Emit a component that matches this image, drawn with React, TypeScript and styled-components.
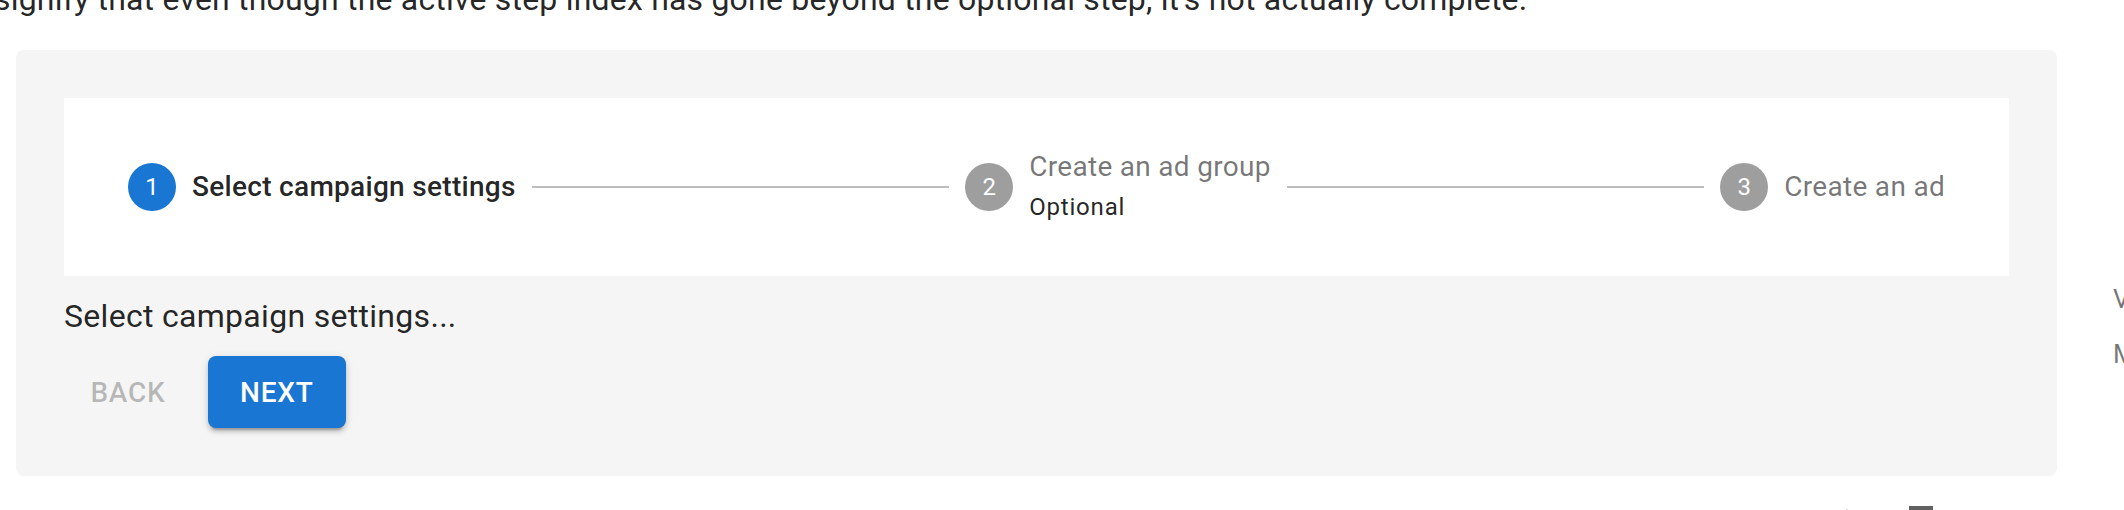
import React from 'react';
import styled, { createGlobalStyle } from 'styled-components';

const GlobalStyle = createGlobalStyle`
html, body {
    margin: 0;
    padding: 0;
    background: #fff;
    overflow: hidden;
    font-family: Roboto, "Liberation Sans", Arial, sans-serif;
    -webkit-font-smoothing: antialiased;
}
`;

interface StepData {
    label: string;
    optional?: boolean;
}

const steps: StepData[] = [
    { label: 'Select campaign settings' },
    { label: 'Create an ad group', optional: true },
    { label: 'Create an ad' },
];

const activeStep = 0;

const Page = styled.div`
    display: flex;
    width: 2124px;
    height: 510px;
    overflow: hidden;
`;

const Main = styled.div`
    flex: none;
    width: 2057px;
    display: flex;
    flex-direction: column;
`;

const Intro = styled.p`
    margin: -25px 0 0 -6px;
    font-size: 32px;
    line-height: 48px;
    letter-spacing: 0.2px;
    color: rgba(0, 0, 0, 0.87);
    white-space: nowrap;
`;

const Demo = styled.div`
    margin: 27px 0 0 16px;
    padding: 48px;
    background: #f5f5f5;
    border-radius: 8px;
`;

const Stepper = styled.div`
    display: flex;
    align-items: center;
    padding: 49px 48px;
    background: #fff;
`;

const Step = styled.div`
    flex: none;
    padding: 0 16px;
    display: flex;
    align-items: center;
`;

const IconBox = styled.span`
    flex: none;
    display: flex;
    padding-right: 16px;
`;

const Circle = styled.span<{ $active: boolean }>`
    width: 48px;
    height: 48px;
    border-radius: 50%;
    background: ${(p) => (p.$active ? '#1976d2' : 'rgba(0, 0, 0, 0.38)')};
    color: #fff;
    font-size: 24px;
    display: flex;
    align-items: center;
    justify-content: center;
`;

const LabelBox = styled.span`
    display: flex;
    flex-direction: column;
`;

const Label = styled.span<{ $active: boolean }>`
    font-size: 28px;
    line-height: 40px;
    letter-spacing: 0.01071em;
    font-weight: ${(p) => (p.$active ? 500 : 400)};
    color: ${(p) => (p.$active ? 'rgba(0, 0, 0, 0.87)' : 'rgba(0, 0, 0, 0.54)')};
    white-space: nowrap;
`;

const Caption = styled.span`
    font-size: 24px;
    line-height: 40px;
    letter-spacing: 0.03333em;
    color: rgba(0, 0, 0, 0.87);
`;

const Connector = styled.div`
    flex: 1 1 auto;
    border-top: 2px solid #bdbdbd;
`;

const Instructions = styled.p`
    margin: 16px 0;
    font-size: 32px;
    line-height: 48px;
    letter-spacing: 0.00938em;
    color: rgba(0, 0, 0, 0.87);
`;

const Actions = styled.div`
    display: flex;
    gap: 16px;
`;

const Button = styled.button<{ $contained?: boolean }>`
    height: 72px;
    min-width: 128px;
    padding: 0 ${(p) => (p.$contained ? '32px' : '16px')};
    border: none;
    border-radius: 8px;
    font-family: Roboto, "Liberation Sans", Arial, sans-serif;
    font-size: 28px;
    font-weight: 500;
    letter-spacing: 0.02857em;
    text-transform: uppercase;
    color: ${(p) => (p.$contained ? '#fff' : 'rgba(0, 0, 0, 0.26)')};
    background: ${(p) => (p.$contained ? '#1976d2' : 'transparent')};
    box-shadow: ${(p) =>
        p.$contained
            ? '0 6px 2px -4px rgba(0,0,0,0.2), 0 4px 4px 0 rgba(0,0,0,0.14), 0 2px 10px 0 rgba(0,0,0,0.12)'
            : 'none'};
    cursor: ${(p) => (p.$contained ? 'pointer' : 'default')};
`;

const Toolbar = styled.div`
    display: flex;
    justify-content: flex-end;
    gap: 26px;
    margin-top: 25px;
    padding-right: 112px;
`;

const ToolIcon = styled.svg`
    flex: none;
    width: 48px;
    height: 48px;
    fill: #616161;
`;

const Toc = styled.ul`
    list-style: none;
    margin: 0;
    padding: 272px 0 0 56px;
    white-space: nowrap;
`;

const TocItem = styled.li`
    font-size: 26px;
    line-height: 39px;
    padding: 8px 0;
    color: rgba(0, 0, 0, 0.54);
`;

export default function App() {
    return <>
        <GlobalStyle />
        <Page>
            <Main>
                <Intro>
                    signify that even though the active step index has gone beyond the optional step, it's not actually complete.
                </Intro>
                <Demo>
                    <Stepper>
                        { steps.map((step, index) => {
                            const active = index === activeStep;
                            return <React.Fragment key={step.label}>
                                { index > 0 && <Connector /> }
                                <Step>
                                    <IconBox>
                                        <Circle $active={active}>{ index + 1 }</Circle>
                                    </IconBox>
                                    <LabelBox>
                                        <Label $active={active}>{ step.label }</Label>
                                        { step.optional && <Caption>Optional</Caption> }
                                    </LabelBox>
                                </Step>
                            </React.Fragment>;
                        }) }
                    </Stepper>
                    <Instructions>Select campaign settings...</Instructions>
                    <Actions>
                        <Button disabled>Back</Button>
                        <Button $contained>Next</Button>
                    </Actions>
                </Demo>
                <Toolbar>
                    <ToolIcon viewBox="0 0 48 48">
                        <path d="M24 8l4 8h-8z" />
                    </ToolIcon>
                    <ToolIcon viewBox="0 0 48 48">
                        <path d="M12 5h24v4H16v26h-4z" />
                    </ToolIcon>
                </Toolbar>
            </Main>
            <Toc>
                <TocItem>Vertical stepper</TocItem>
                <TocItem>Mobile stepper</TocItem>
            </Toc>
        </Page>
    </>;
}
